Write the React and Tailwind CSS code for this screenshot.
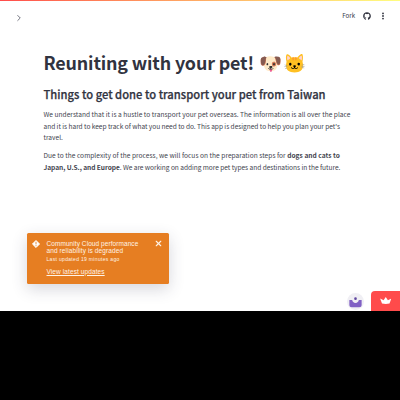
import { FaGithub } from "react-icons/fa";
import { ChevronRight, X } from "lucide-react";

function Header() {
  return (
    <header className="flex h-[29px] items-center justify-between pl-[13.5px] pr-[12px] pt-px">
      <ChevronRight className="mt-[4px] size-[10px] text-[#666874]" strokeWidth={2.2} />
      <div className="flex items-center">
        <span className="text-[6.1px] leading-none text-[#31333f]">Fork</span>
        <FaGithub className="ml-[8px] size-[8px] text-[#31333f]" />
        <svg viewBox="0 0 10 10" className="ml-[7px] size-[10px] fill-[#31333f]">
          <circle cx="5" cy="2.4" r="0.9" />
          <circle cx="5" cy="5" r="0.9" />
          <circle cx="5" cy="7.6" r="0.9" />
        </svg>
      </div>
    </header>
  );
}

function Notice() {
  return (
    <section className="ml-[27px] mt-[59px] flex h-[51px] w-[142px] shrink-0 rounded-[1.5px] bg-[#e67e22] pl-[4.5px] text-[#fff3e6] shadow-[0_5px_16px_rgba(49,51,80,0.2)] font-['Liberation_Sans',sans-serif]">
      <svg viewBox="0 0 8 8" className="mt-[7px] size-[8px] shrink-0">
        <path d="M4 0.4 7.6 4 4 7.6 0.4 4Z" fill="#fff" stroke="#fff" strokeWidth="0.8" strokeLinejoin="round" />
        <path d="M4 1.9v2.5M4 5.2v.9" stroke="#e67e22" strokeWidth="0.9" />
      </svg>
      <div className="ml-[7px] w-[107.5px] shrink-0 whitespace-nowrap pt-[7px]">
        <p className="text-[6.5px] leading-[7px] tracking-[0.07px]">Community Cloud performance<br /><span className="tracking-[0.11px]">and reliability is degraded</span></p>
        <p className="mt-[2.5px] text-[5px] leading-[6px] tracking-[0.32px]">Last updated 19 minutes ago</p>
        <a className="mt-[5.5px] block w-fit text-[6.5px] leading-[7px] tracking-[0.1px] underline">View latest updates</a>
      </div>
      <X className="mt-[6px] size-[9px]" strokeWidth={3} />
    </section>
  );
}

export default function App() {
  return (
    <div className="flex h-[400px] w-[400px] flex-col overflow-hidden bg-black font-['Noto_Sans_CJK_SC',sans-serif] text-[#31333f]">
      <div className="flex h-[311px] flex-col bg-white">
        <div className="h-px shrink-0 bg-linear-to-r from-[#ff4b4b] to-[#fffd80]" />
        <Header />
        <main className="ml-[43.5px] mt-[19px] whitespace-nowrap">
          <h1 className="flex h-[27px] items-center text-[17.9px] font-bold leading-[27px] tracking-[-0.16px]">
            Reuniting with your pet!<span className="ml-[5px] text-[18.5px] tracking-[1.3px]">🐶🐱</span>
          </h1>
          <h2 className="mt-[9px] text-[11.2px] font-medium leading-[18px] tracking-[0.015px] [-webkit-text-stroke:0.25px_#31333f]">Things to get done to transport your pet from Taiwan</h2>
          <p className="mt-[6px] text-[6.6px] leading-[11.7px] text-[#43454f]">
            <span className="tracking-[0.022px]">We understand that it is a hustle to transport your pet overseas. The information is all over the place</span><br />
            <span className="tracking-[-0.045px]">and it is hard to keep track of what you need to do. This app is designed to help you plan your pet's</span><br />
            travel.
          </p>
          <p className="mt-[6px] text-[6.6px] leading-[11.7px] text-[#43454f]">
            <span className="tracking-[0.022px]">Due to the complexity of the process, we will focus on the preparation steps for <b>dogs and cats to</b></span><br />
            <span className="tracking-[-0.053px]"><b>Japan, U.S., and Europe</b>. We are working on adding more pet types and destinations in the future.</span>
          </p>
        </main>
        <Notice />
        <footer className="mt-auto flex h-[20px] shrink-0 items-center justify-end gap-[7px]">
          <svg viewBox="0 0 18 18" className="size-[17px]">
            <circle cx="9" cy="9" r="9" fill="#f0eff4" />
            <path d="M2.5 7.5h3q.5 3 3.5 3t3.500-3h3v5.500q0 2-2.500 2h-8Q2.500 15 2.500 13Z" fill="#8060c4" />
            <circle cx="9" cy="6" r="1.4" fill="#6048a0" />
          </svg>
          <div className="flex h-[20px] w-[29.5px] items-center justify-center rounded-tl-[4px] bg-[#ff4b4b]">
            <svg viewBox="0 0 12 8" className="h-[7.5px] w-[11.5px] fill-white">
              <path d="M0 1.7 3.7 3.4 6 0l2.300 3.400L12 1.700 10 7q-4 .9-8 0Z" />
            </svg>
          </div>
        </footer>
      </div>
    </div>
  );
}
